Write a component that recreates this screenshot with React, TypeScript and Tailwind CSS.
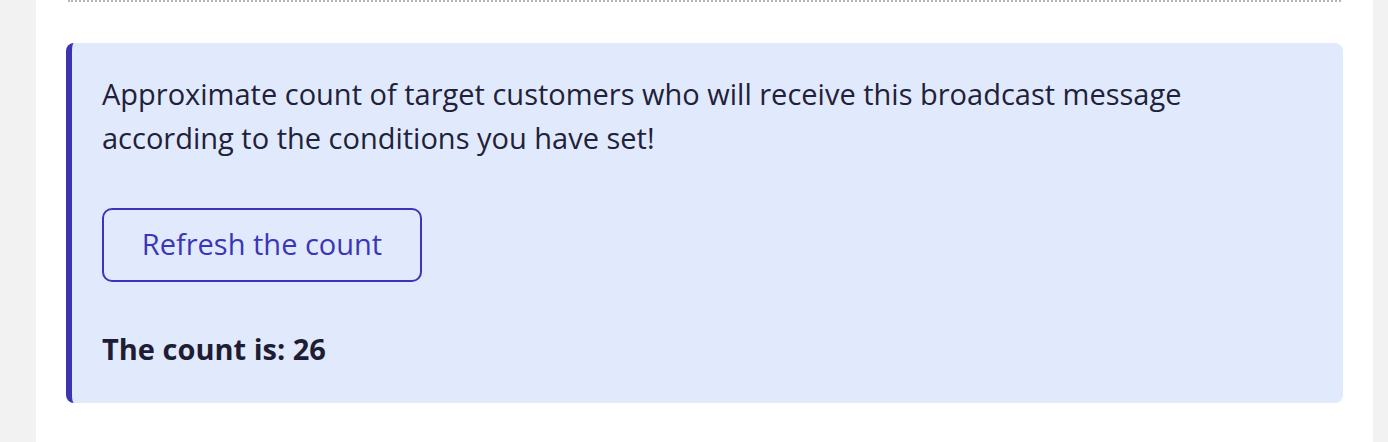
export default function App() {
    return (
        <div className="min-h-[442px] bg-[#f2f2f2] pl-[36px] pr-[15px] font-['Open_Sans','Noto_Sans',sans-serif]">
            <div className="min-h-[442px] bg-white px-[30px]">
                {/* bottom edge of the previous section */}
                <div className="mx-[2px] h-[2px] border-b-2 border-dotted border-[#b5b5b5]"></div>

                <div className="mt-[41px] rounded-[8px] border-l-[6px] border-[#3b35b0] bg-[#e1eafc] pt-[29px] pr-[30px] pb-[32px] pl-[30px]">
                    <p className="text-[29px] leading-[44px] text-[#22213a]">
                        Approximate count of target customers who will receive this broadcast message
                        <br />
                        according to the conditions you have set!
                    </p>

                    <button className="mt-[48px] flex h-[74px] w-[320px] items-center justify-center rounded-[10px] border-2 border-[#3b36b8] pb-[3px] text-[29px] text-[#3b36b8]">
                        Refresh the count
                    </button>

                    <p className="mt-[45px] text-[29px] leading-[44px] font-bold text-[#1e1d33]">
                        The count is: 26
                    </p>
                </div>
            </div>
        </div>
    );
}
